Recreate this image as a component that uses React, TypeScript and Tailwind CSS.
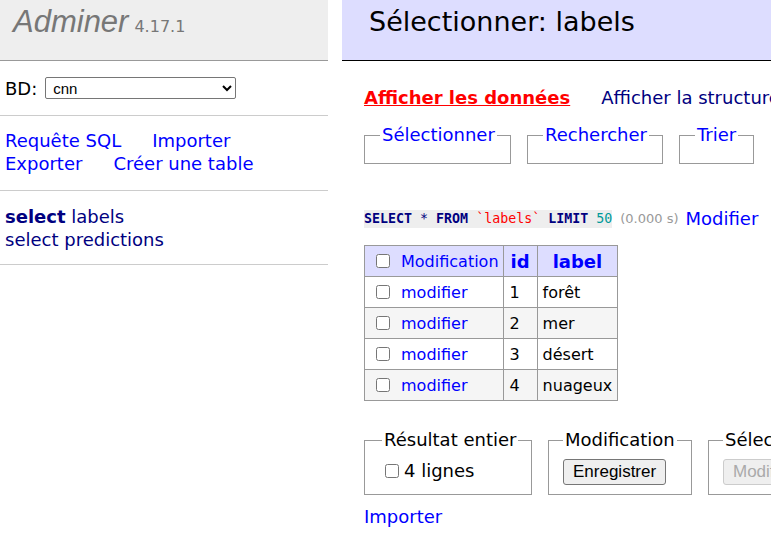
import React from "react";

const rows = [
  { id: 1, label: "forêt" },
  { id: 2, label: "mer" },
  { id: 3, label: "désert" },
  { id: 4, label: "nuageux" },
];

const verdana = "font-['DejaVu_Sans',Verdana,sans-serif]";

function Box({ legend, className = "", children }: { legend: string; className?: string; children?: React.ReactNode }) {
  return (
    <fieldset className={`border border-[#999] px-[15px] pb-[8px] shrink-0 min-w-0 ${className}`}>
      <legend className="px-[2px] text-[#00f] leading-[22px]">{legend}</legend>
      {children}
    </fieldset>
  );
}

export default function App() {
  return (
    <div className={`w-[771px] h-[543px] overflow-hidden bg-white flex text-[18px] leading-[23px] text-black ${verdana}`}>
      {/* menu */}
      <div className="w-[328px] shrink-0">
        <div className="h-[61px] bg-[#eee] border-b border-[#999] pl-[13px] pt-[4px]">
          <span className="font-['Liberation_Sans',Arial,sans-serif] italic text-[31px] leading-[36px] text-[#777]">Adminer</span>
          <span className="ml-[6px] text-[16px] text-[#777]">4.17.1</span>
        </div>
        <div className="h-[55px] border-b border-[#ccc] px-[5px] flex items-center">
          <span>BD:</span>
          <select className="ml-[8px] w-[191px] h-[22px] border border-[#767676] rounded-[2px] bg-white text-[15px] font-['Liberation_Sans',Arial,sans-serif] px-[3px]">
            <option>cnn</option>
          </select>
        </div>
        <div className="border-b border-[#ccc] px-[5px] pt-[13px] pb-[15px] text-[#00f]">
          <div>
            <span>Requête SQL</span>
            <span className="ml-[31px]">Importer</span>
          </div>
          <div>
            <span>Exporter</span>
            <span className="ml-[31px]">Créer une table</span>
          </div>
        </div>
        <div className="border-b border-[#ccc] px-[5px] pt-[14px] pb-[13px] text-[#000080]">
          <div><b>select</b> labels</div>
          <div>select predictions</div>
        </div>
      </div>

      {/* content */}
      <div className="ml-[14px] flex-1 min-w-0">
        <h2 className="h-[61px] bg-[#ddf] border-b border-black pl-[27px] pt-[4px] text-[27px] leading-[36px] font-normal whitespace-nowrap">
          Sélectionner: labels
        </h2>
        <div className="pl-[22px]">
          <div className="mt-[25px] whitespace-nowrap">
            <span className="text-[#f00] font-bold underline">Afficher les données</span>
            <span className="ml-[31px] text-[#000080]">Afficher la structure</span>
          </div>

          <div className="mt-[15px] flex gap-[16px] items-start">
            <Box legend="Sélectionner" className="w-[147px] h-[40px]" />
            <Box legend="Rechercher" className="w-[136px] h-[40px]" />
            <Box legend="Trier" className="w-[75px] h-[40px]" />
          </div>

          <div className="mt-[43px] flex items-center whitespace-nowrap">
            <code className="bg-[#eee] font-['DejaVu_Sans_Mono',monospace] text-[13.3px] leading-[18px] text-[#000080]">
              <b>SELECT</b> * <b>FROM</b> <span className="text-[#f00]">`labels`</span> <b>LIMIT</b>{" "}
              <span className="text-[#099]">50</span>
            </code>
            <span className="ml-[8px] text-[13px] text-[#999]">(0.000 s)</span>
            <span className="ml-[7px] text-[#00f]">Modifier</span>
          </div>

          <table className="mt-[15px] border-collapse border border-[#999] text-[16px]">
            <thead>
              <tr className="bg-[#ddf] h-[31px]">
                <td className="border border-[#999] pl-[11px] pr-[4px] whitespace-nowrap">
                  <span className="flex items-center">
                    <input type="checkbox" className="w-[14px] h-[14px] m-0" />
                    <span className="ml-[11px] text-[#00f]">Modification</span>
                  </span>
                </td>
                <th className="border border-[#999] px-[7px] text-[#00f] font-bold text-[18px]">id</th>
                <th className="border border-[#999] px-[7px] text-[#00f] font-bold text-[18px]">label</th>
              </tr>
            </thead>
            <tbody>
              {rows.map((r, i) => (
                <tr key={r.id} className={`h-[31px] ${i % 2 ? "bg-[#f5f5f5]" : "bg-white"}`}>
                  <td className="border border-[#999] pl-[11px] pr-[4px]">
                    <span className="flex items-center">
                      <input type="checkbox" className="w-[14px] h-[14px] m-0" />
                      <span className="ml-[11px] text-[#00f]">modifier</span>
                    </span>
                  </td>
                  <td className="border border-[#999] pl-[6px]">{r.id}</td>
                  <td className="border border-[#999] px-[5px]">{r.label}</td>
                </tr>
              ))}
            </tbody>
          </table>

          <div className="mt-[28px] flex gap-[16px] items-start whitespace-nowrap">
            <fieldset className="border border-[#999] pl-[20px] pr-[15px] w-[168px] h-[66px] shrink-0 min-w-0">
              <legend className="px-[2px] -ml-[3px] leading-[22px]">Résultat entier</legend>
              <label className="flex items-center mt-[8px]">
                <input type="checkbox" className="w-[14px] h-[14px] m-0" />
                <span className="ml-[5px]">4 lignes</span>
              </label>
            </fieldset>
            <fieldset className="border border-[#999] pl-[14px] pr-[15px] w-[144px] h-[66px] shrink-0 min-w-0">
              <legend className="px-[2px] leading-[22px]">Modification</legend>
              <button className="mt-[8px] h-[26px] px-[9px] bg-[#efefef] border border-[#767676] rounded-[3px] text-[17px] leading-[20px] font-['Liberation_Sans',Arial,sans-serif]">
                Enregistrer
              </button>
            </fieldset>
            <fieldset className="border border-[#999] pl-[14px] pr-[15px] w-[160px] h-[66px] shrink-0 min-w-0">
              <legend className="px-[2px] leading-[22px]">Sélection</legend>
              <button disabled className="mt-[8px] h-[26px] px-[9px] bg-[#efefef] border border-[#ccc] rounded-[3px] text-[17px] leading-[20px] text-[#aaa] font-['Liberation_Sans',Arial,sans-serif]">
                Modifier
              </button>
            </fieldset>
          </div>

          <div className="mt-[10px] text-[#00f]">Importer</div>
        </div>
      </div>
    </div>
  );
}
